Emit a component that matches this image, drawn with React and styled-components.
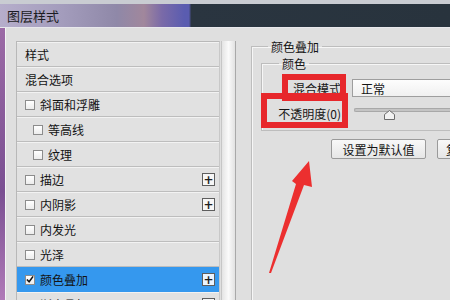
import styled, { createGlobalStyle } from "styled-components";

const Global = createGlobalStyle`
  html, body { margin: 0; padding: 0; background: #dedede; }
  * { box-sizing: border-box; }
`;

const Frame = styled.div`
  position: relative;
  width: 450px;
  height: 300px;
  overflow: hidden;
  display: flex;
  flex-direction: column;
  font-family: "Noto Sans CJK SC", "Noto Sans", sans-serif;
  font-size: 12px;
  color: #151515;
`;

const TopStrip = styled.div`
  flex: none;
  height: 4px;
  background: #c9ccd2;
`;

const TitleBar = styled.div`
  flex: none;
  height: 24px;
  display: flex;
  align-items: center;
  padding-left: 7px;
  font-size: 13px;
  color: #1c1c22;
  background: linear-gradient(
    90deg,
    #b6aecb 0%,
    #a39cbc 14%,
    #8f88a8 26%,
    #a1879c 32%,
    #7a6aa8 36%,
    #5a5cb0 41%,
    #5a5cb0 42%,
    #2a3540 42.5%,
    #28333d 100%
  );
  border-bottom: 1px solid #e8e8ec;
`;

const Body = styled.div`
  flex: 1;
  min-height: 0;
  overflow: hidden;
  display: flex;
  background: linear-gradient(180deg, #9c6aa6, #7a4f92 60%, #b07ab8);
  padding-left: 5px;
`;

const Window = styled.div`
  flex: 1;
  display: flex;
  align-items: flex-start;
  background: #dfdfdf;
  border-left: 1px solid #f4f4f4;
  padding: 13px 0 0 10px;
`;

const List = styled.div`
  flex: none;
  width: 204px;
  display: flex;
  flex-direction: column;
  background: #e1e1e1;
  border: 1px solid #b8b8b8;
  border-right-color: #c8c8c8;
`;

const Row = styled.div`
  flex: none;
  height: 25px;
  display: flex;
  align-items: center;
  padding-left: ${(p) => 8 + (p.$indent ? 8 : 0)}px;
  padding-right: 4px;
  background: ${(p) => (p.$active ? "#3598ee" : "#e1e1e1")};
  border-top: 1px solid ${(p) => (p.$active ? "#3598ee" : "#f2f2f2")};
  border-bottom: 1px solid ${(p) => (p.$active ? "#3598ee" : "#bdbdbd")};
  color: #131313;
`;

const Check = styled.span`
  width: 10px;
  height: 10px;
  margin-right: 5px;
  border: 1px solid #8c8c8c;
  background: linear-gradient(180deg, #ffffff, #ececec);
  display: flex;
  align-items: center;
  justify-content: center;
`;

const Plus = styled.span`
  margin-left: auto;
  width: 13px;
  height: 13px;
  border: 1px solid #5e5e5e;
  background: ${(p) => (p.$active ? "#eaf4ff" : "#f6f6f6")};
  display: flex;
  align-items: center;
  justify-content: center;
  font-family: "DejaVu Sans", sans-serif;
  font-weight: bold;
  font-size: 12px;
  line-height: 1;
  color: #1e1e1e;
`;

const Scroller = styled.div`
  align-self: stretch;
  flex: none;
  width: 15px;
  margin-left: 1px;
  background: linear-gradient(90deg, #e4e4e4, #fafafa 50%, #e2e2e2);
  border-left: 1px solid #c6c6c6;
  border-right: 1px solid #a9a9a9;
`;

const Pane = styled.div`
  margin-left: 15px;
  margin-top: -3px;
  flex: 1;
  min-width: 0;
  align-self: stretch;
`;

const Group = styled.fieldset`
  margin: 0;
  margin-left: ${(p) => p.$ml || 0}px;
  padding: 0 0 ${(p) => p.$pb || 0}px 0;
  border: 1px solid #bdbdbd;
  box-shadow: inset 1px 1px 0 #f6f6f6;
  border-right: none;
  min-width: 0;
  min-height: ${(p) => p.$h || 0}px;
`;

const Legend = styled.legend`
  margin-left: ${(p) => p.$ml}px;
  padding: 0 3px;
  line-height: 17px;
  font-size: 12px;
  color: #151515;
`;

const FieldRow = styled.div`
  display: flex;
  align-items: center;
  height: 18px;
  margin-top: ${(p) => p.$mt}px;
`;

const Label = styled.span`
  flex: none;
  width: 79px;
  text-align: right;
  margin-right: 11px;
  white-space: nowrap;
`;

const Select = styled.div`
  flex: 1;
  height: 18px;
  background: linear-gradient(180deg, #fdfdfd, #f0f0f0);
  border: 1px solid #9e9e9e;
  border-right: none;
  padding-left: 8px;
  display: flex;
  align-items: center;
`;

const Slider = styled.div`
  position: relative;
  flex: 1;
  height: 18px;
  margin-left: 2px;
`;

const Track = styled.div`
  margin-top: 4px;
  height: 4px;
  background: #c4c4c4;
  border: 1px solid #a8a8a8;
  border-right: none;
  border-radius: 2px 0 0 2px;
`;

const Thumb = styled.svg`
  position: absolute;
  left: 30px;
  top: 6px;
`;

const Buttons = styled.div`
  display: flex;
  gap: 11px;
  margin-top: 8px;
  padding-left: 79px;
`;

const Button = styled.div`
  flex: none;
  width: ${(p) => p.$w}px;
  height: 20px;
  border: 1px solid #9a9a9a;
  border-radius: 2px;
  background: linear-gradient(180deg, #f8f8f8, #e6e6e6);
  display: flex;
  align-items: center;
  justify-content: ${(p) => (p.$left ? "flex-start" : "center")};
  padding-left: ${(p) => (p.$left ? 8 : 0)}px;
  font-size: 12px;
  white-space: nowrap;
  overflow: hidden;
`;

const Mark = styled.div`
  position: absolute;
  left: ${(p) => p.$x}px;
  top: ${(p) => p.$y}px;
  width: ${(p) => p.$w}px;
  height: ${(p) => p.$h}px;
  border: 6px solid #e7272b;
  pointer-events: none;
`;

const Arrow = styled.svg`
  position: absolute;
  left: 0;
  top: 0;
`;

const items = [
  { label: "样式", noBox: true },
  { label: "混合选项", noBox: true },
  { label: "斜面和浮雕" },
  { label: "等高线", indent: true },
  { label: "纹理", indent: true },
  { label: "描边", plus: true },
  { label: "内阴影", plus: true },
  { label: "内发光" },
  { label: "光泽" },
  { label: "颜色叠加", plus: true, active: true, checked: true },
  { label: "渐变叠加", plus: true },
];

export default function App() {
  return (
    <Frame>
      <Global />
      <TopStrip />
      <TitleBar>图层样式</TitleBar>
      <Body>
        <Window>
          <List>
            {items.map((it) => (
              <Row key={it.label} $indent={it.indent} $active={it.active}>
                {!it.noBox && (
                  <Check>
                    {it.checked && (
                      <svg width="9" height="9" viewBox="0 0 9 9">
                        <path d="M1 4.5 L3.5 7 L8 1" fill="none" stroke="#111" strokeWidth="1.8" />
                      </svg>
                    )}
                  </Check>
                )}
                {it.label}
                {it.plus && <Plus $active={it.active}>+</Plus>}
              </Row>
            ))}
          </List>
          <Scroller />
          <Pane>
            <Group $h={280}>
              <Legend $ml={16}>颜色叠加</Legend>
              <Group $ml={9} $pb={8}>
                <Legend $ml={17}>颜色</Legend>
                <FieldRow $mt={7}>
                  <Label>混合模式</Label>
                  <Select>正常</Select>
                </FieldRow>
                <FieldRow $mt={7}>
                  <Label>不透明度(0)</Label>
                  <Slider>
                    <Track />
                    <Thumb width="11" height="10" viewBox="0 0 11 10">
                      <path d="M0.5 9.5 V4.5 L5.5 0.5 L10.5 4.5 V9.5 Z" fill="#f2f2f2" stroke="#6c6c6c" />
                    </Thumb>
                  </Slider>
                </FieldRow>
              </Group>
              <Buttons>
                <Button $w={95}>设置为默认值</Button>
                <Button $w={95} $left>复位为默认值</Button>
              </Buttons>
            </Group>
          </Pane>
        </Window>
      </Body>
      <Mark $x={282} $y={74} $w={64} $h={27} />
      <Mark $x={261} $y={93} $w={87} $h={35} />
      <Arrow width="450" height="300" viewBox="0 0 450 300">
        <polygon
          points="269,273 296,184 292,181 309,161 312,187 304,185 271,273"
          fill="#ec2f2f"
        />
      </Arrow>
    </Frame>
  );
}
